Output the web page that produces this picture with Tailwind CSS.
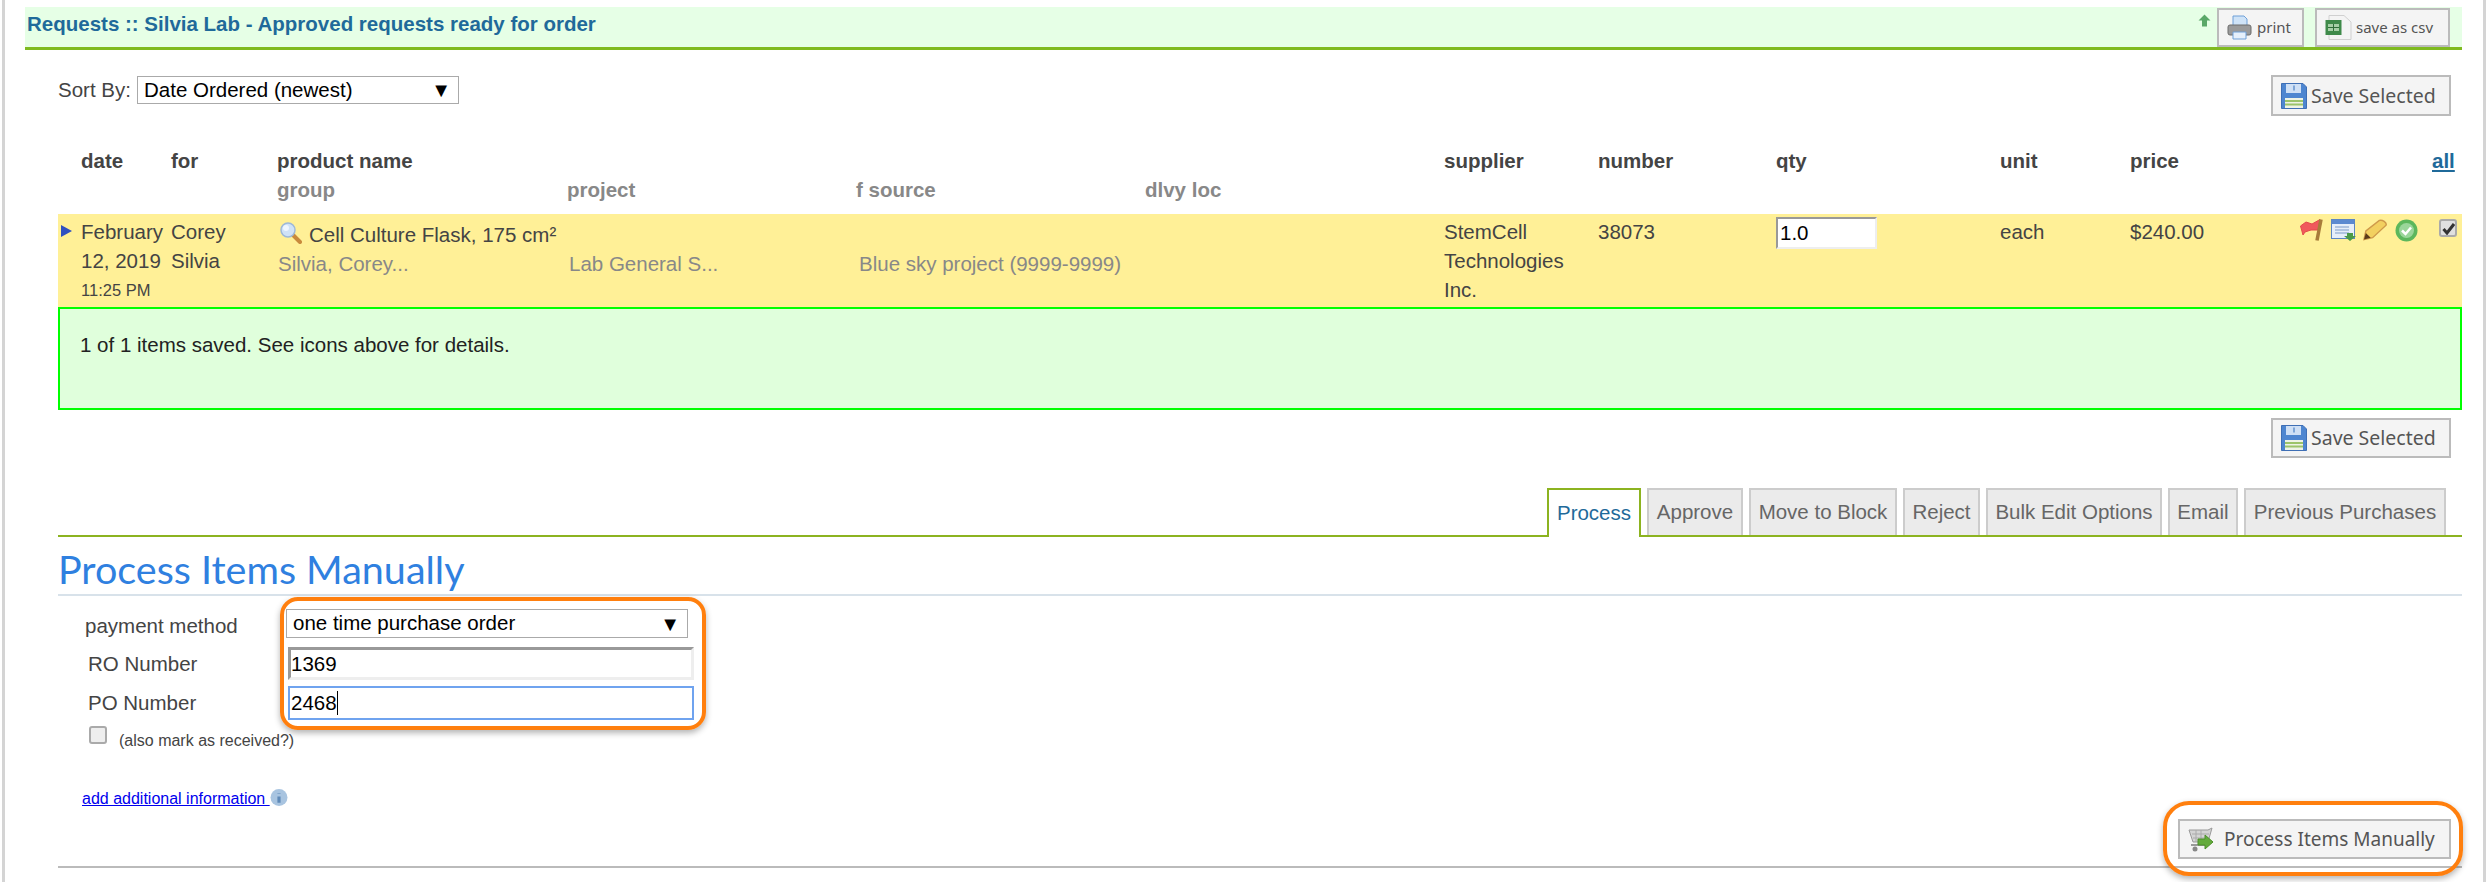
<!DOCTYPE html>
<html lang="en">
<head>
<meta charset="UTF-8">
<title>Requests - Approved requests ready for order</title>
<script src="https://cdn.jsdelivr.net/npm/@tailwindcss/browser@4"></script>
</head>
<body class="bg-white font-['Liberation_Sans',sans-serif] text-[20.5px] text-[#444]">
<div class="relative h-[882px] w-[2489px] overflow-hidden">
  <!-- page frame -->
  <div class="ml-[2px] h-[882px] w-[2484px] border-x-[3px] border-[#d4d4d4] pl-[20px] pt-[7px]">
    <!-- title bar -->
    <div class="flex h-[43px] w-[2437px] items-start border-b-[3px] border-[#7fba1f] bg-[#e6ffe6] pl-[2px]">
      <h1 class="pt-[6px] text-[20.5px] leading-[22px] font-bold text-[#1f6a9a]">Requests :: Silvia Lab - Approved requests ready for order</h1>
      <div class="ml-auto flex items-start pr-[12px]">
        <svg class="mt-[7px] mr-[6px] h-[13px] w-[13px]" viewBox="0 0 13 13"><path d="M6.500 0.500 L12.500 6.500 H9 V12.500 H4 V6.500 H0.500 Z" fill="#5aa868"/></svg>
        <button class="mt-[1px] flex h-[39px] w-[87px] items-center border-2 border-[#bbb] bg-[#f4f4f4] pl-[8px] font-['Noto_Sans',sans-serif] text-[15px] text-[#555]">
          <svg class="mr-[5px] h-[25px] w-[25px]" viewBox="0 0 25 25"><path d="M6 1 H17 L20 4 V11 H6 Z" fill="#cfe3f7" stroke="#6fa0d8"/><rect x="1" y="10" width="23" height="10" rx="2" fill="#9a9a9a" stroke="#6c6c6c"/><path d="M6 17 H19 V24 H6 Z" fill="#e6f0fb" stroke="#6fa0d8"/></svg>print
        </button>
        <button class="mt-[1px] ml-[11px] flex h-[39px] w-[135px] items-center border-2 border-[#bbb] bg-[#f4f4f4] pl-[8px] font-['Noto_Sans',sans-serif] text-[15px] text-[#555]">
          <svg class="mr-[4px] h-[25px] w-[27px]" viewBox="0 0 27 25"><path d="M4 0.500 H19 L26 7 V24.500 H4 Z" fill="#f4f4f4" stroke="#d0d0d0"/><rect x="0.500" y="5" width="16" height="15" fill="#3f8a4a"/><path d="M3 9 H14 V16 H3 Z" fill="#a6cfa6"/><path d="M8.500 9 V16 M3 12.500 H14" stroke="#2f6d39"/></svg>save as csv
        </button>
      </div>
    </div>

    <!-- sort + save -->
    <div class="flex w-[2426px] items-start pl-[33px]">
      <div class="flex items-center pt-[26px]">
        <label class="w-[79px] leading-[28px]">Sort By:</label>
        <div class="flex h-[28px] w-[322px] items-center justify-between border border-[#aaa] pr-[7px] pl-[6px] text-black"><span>Date Ordered (newest)</span><span class="text-[20px] leading-[20px]">▼</span></div>
      </div>
      <button class="mt-[25px] ml-auto flex h-[41px] w-[180px] items-center border-2 border-[#bbb] bg-[#f4f4f4] pl-[8px] font-['Noto_Sans',sans-serif] text-[19.500px] text-[#555]">
        <svg class="mr-[4px] h-[26px] w-[26px]" viewBox="0 0 26 26"><path d="M0.500 0.500 H22 L25.500 4 V25.500 H0.500 Z" fill="#4e86d0" stroke="#3f6fb5"/><rect x="5" y="1" width="15" height="9" fill="#cfe0f5"/><rect x="12" y="2.500" width="2" height="5" fill="#7ea6d8"/><rect x="4" y="15" width="18" height="10" fill="#eef3e6"/><path d="M4 18 H22 M4 21.500 H22" stroke="#9cc46a" stroke-width="2"/></svg>Save Selected
      </button>
    </div>

    <!-- table -->
    <div class="mt-[31px] ml-[33px] w-[2404px]">
      <div class="grid h-[67px] grid-cols-[23px_90px_106px_1167px_154px_178px_224px_130px_1fr_30px] leading-[27px] font-bold">
        <div></div>
        <div>date</div>
        <div>for</div>
        <div>
          <div>product name</div>
          <div class="grid grid-cols-[290px_289px_289px_1fr] leading-[31px] text-[#888]">
            <div>group</div><div>project</div><div>f source</div><div>dlvy loc</div>
          </div>
        </div>
        <div>supplier</div>
        <div>number</div>
        <div>qty</div>
        <div>unit</div>
        <div>price</div>
        <a class="text-[#1f6a9a] underline">all</a>
      </div>
      <div class="grid h-[93px] grid-cols-[23px_90px_106px_1167px_154px_178px_224px_130px_158px_1fr] bg-[#fff097] pt-[3px] leading-[29px]">
        <div class="pt-[8px] pl-[2px]"><svg class="h-[12px] w-[12px]" viewBox="0 0 12 12"><path d="M1 0 L12 6 L1 12 Z" fill="#2f50c0"/></svg></div>
        <div>February 12, 2019<div class="text-[16.500px] leading-[31px]">11:25 PM</div></div>
        <div class="pr-[10px]">Corey Silvia</div>
        <div>
          <div class="flex items-center">
            <svg class="mr-[7px] ml-[3px] h-[22px] w-[22px]" viewBox="0 0 22 22"><path d="M13 13 L20 20" stroke="#c98a3c" stroke-width="4" stroke-linecap="round"/><circle cx="8" cy="8" r="7" fill="#cfe2f7" stroke="#9db8d8" stroke-width="1.500"/><circle cx="6" cy="6" r="3" fill="#eef6ff"/></svg>
            <span class="pt-[3px]">Cell Culture Flask, 175 cm²</span>
          </div>
          <div class="grid grid-cols-[291px_290px_1fr] pl-[1px] text-[#888]">
            <div>Silvia, Corey...</div><div>Lab General S...</div><div>Blue sky project (9999-9999)</div>
          </div>
        </div>
        <div class="pr-[20px]">StemCell Technologies Inc.</div>
        <div>38073</div>
        <div><input class="h-[32px] w-[101px] border-2 border-t-[#999] border-r-[#eee] border-b-[#eee] border-l-[#999] bg-white pl-[2px] text-black" value="1.0"></div>
        <div>each</div>
        <div>$240.00</div>
        <div class="flex items-start pt-[2px] pl-[12px]">
          <svg class="h-[22px] w-[23px] shrink-0" viewBox="0 0 23 22"><path d="M0.500 7 L6 3 L12 5 L20 0.500 L18 11 L11 11 L5 13 L3 16 Z" fill="#f0595c" stroke="#e34b4b"/><path d="M21 0.500 L17 21.500" stroke="#a87c3a" stroke-width="3.500"/></svg>
          <svg class="ml-[8px] h-[22px] w-[26px] shrink-0" viewBox="0 0 26 22"><rect x="0.500" y="0.500" width="23" height="19" fill="#e6eef9" stroke="#5c86c4"/><rect x="1" y="1" width="22" height="4" fill="#5c8ad0"/><path d="M4 8 H18 M4 11 H18 M4 14 H18" stroke="#7c9bc8"/><path d="M16 14 H22 V17 H25 L19 22 L13 17 H16 Z" fill="#4a9a48"/></svg>
          <svg class="ml-[6px] h-[22px] w-[25px] shrink-0" viewBox="0 0 26 22"><path d="M1 21 L3 12 L17 1 C20 0 25 3 24 6 L10 19 Z" fill="#f2d060" stroke="#cf9a4a" stroke-width="1.500"/><path d="M1 21 L3 14 L8 19 Z" fill="#5a3a1a"/></svg>
          <svg class="ml-[7px] h-[23px] w-[23px] shrink-0" viewBox="0 0 23 23"><circle cx="11.500" cy="11.500" r="11" fill="#5cb75c"/><circle cx="11.500" cy="11.500" r="7.500" fill="#9ad69a"/><path d="M7 11.500 L10.500 15 L16 8.500" stroke="#fff" stroke-width="2.500" fill="none"/></svg>
          <div class="ml-[21px] flex h-[18px] w-[18px] shrink-0 items-center justify-center rounded-[3px] border-2 border-[#aaa] bg-[#e0e0e0]"><svg class="h-[13px] w-[13px]" viewBox="0 0 13 13"><path d="M1.500 7 L5 11 L12 2" stroke="#333" stroke-width="3" fill="none"/></svg></div>
        </div>
      </div>
      <div class="h-[103px] border-2 border-[#0f0] bg-[#e0ffdc] pt-[24px] pl-[20px] leading-[24px] text-[#222]">1 of 1 items saved. See icons above for details.</div>
      <div class="flex justify-end pt-[8px] pr-[11px]">
        <button class="flex h-[40px] w-[180px] items-center border-2 border-[#bbb] bg-[#f4f4f4] pl-[8px] font-['Noto_Sans',sans-serif] text-[19.500px] text-[#555]">
          <svg class="mr-[4px] h-[26px] w-[26px]" viewBox="0 0 26 26"><path d="M0.500 0.500 H22 L25.500 4 V25.500 H0.500 Z" fill="#4e86d0" stroke="#3f6fb5"/><rect x="5" y="1" width="15" height="9" fill="#cfe0f5"/><rect x="12" y="2.500" width="2" height="5" fill="#7ea6d8"/><rect x="4" y="15" width="18" height="10" fill="#eef3e6"/><path d="M4 18 H22 M4 21.500 H22" stroke="#9cc46a" stroke-width="2"/></svg>Save Selected
        </button>
      </div>

      <!-- tabs -->
      <div class="mt-[30px] flex h-[49px] items-end justify-end gap-[6px] border-b-2 border-[#8cb320] pr-[16px] text-[#666]">
        <div class="-mb-[2px] flex h-[49px] w-[94px] items-center justify-center border-2 border-b-0 border-[#8cb320] bg-white text-[#1f6a9a]">Process</div>
        <div class="flex h-[47px] w-[96px] items-center justify-center border-2 border-b-0 border-[#ccc] bg-[#ebebeb]">Approve</div>
        <div class="flex h-[47px] w-[148px] items-center justify-center border-2 border-b-0 border-[#ccc] bg-[#ebebeb]">Move to Block</div>
        <div class="flex h-[47px] w-[77px] items-center justify-center border-2 border-b-0 border-[#ccc] bg-[#ebebeb]">Reject</div>
        <div class="flex h-[47px] w-[176px] items-center justify-center border-2 border-b-0 border-[#ccc] bg-[#ebebeb]">Bulk Edit Options</div>
        <div class="flex h-[47px] w-[70px] items-center justify-center border-2 border-b-0 border-[#ccc] bg-[#ebebeb]">Email</div>
        <div class="flex h-[47px] w-[202px] items-center justify-center border-2 border-b-0 border-[#ccc] bg-[#ebebeb]">Previous Purchases</div>
      </div>

      <!-- process form -->
      <h2 class="h-[59px] border-b-2 border-[#d8e2ea] pt-[11px] font-['Lato',sans-serif] text-[39.500px] leading-[42px] text-[#2f80e0]">Process Items Manually</h2>
      <div class="pt-[13px]">
        <div class="flex h-[38px] items-start">
          <label class="w-[228px] pt-[5px] pl-[27px] leading-[24px]">payment method</label>
          <div class="flex h-[29px] w-[402px] items-center justify-between border border-[#aaa] pr-[7px] pl-[6px] text-black"><span>one time purchase order</span><span class="text-[20px] leading-[20px]">▼</span></div>
        </div>
        <div class="flex h-[39px] items-start">
          <label class="w-[230px] pt-[5px] pl-[30px] leading-[24px]">RO Number</label>
          <input class="h-[33px] w-[406px] border-[3px] border-t-[#999] border-r-[#eee] border-b-[#eee] border-l-[#999] text-black" value="1369">
        </div>
        <div class="flex h-[39px] items-start">
          <label class="w-[230px] pt-[5px] pl-[30px] leading-[24px]">PO Number</label>
          <div class="flex h-[34px] w-[406px] items-center border-2 border-[#6fa3ef] pl-[1px] text-black">2468<span class="h-[24px] w-[1px] bg-black"></span></div>
        </div>
        <div class="flex items-start pl-[31px]">
          <div class="mt-[1px] h-[18px] w-[18px] rounded-[3px] border-2 border-[#aaa] bg-[#eee]"></div>
          <span class="pt-[4px] pl-[12px] text-[16px] leading-[24px]">(also mark as received?)</span>
        </div>
        <div class="flex items-start pt-[36px] pl-[24px]">
          <a class="text-[16px] leading-[20px] text-[#0000ee] underline">add additional information&nbsp;</a>
          <svg class="h-[18px] w-[18px]" viewBox="0 0 17 17"><circle cx="8.500" cy="8" r="8" fill="#a8c4e0"/><path d="M8.500 4 V4.500 M8.500 7 V13" stroke="#5f8ab8" stroke-width="3"/></svg>
        </div>
      </div>
      <div class="flex justify-end pt-[10px] pr-[11px]">
        <button class="flex h-[40px] w-[273px] items-center border-2 border-[#bbb] bg-[#f4f4f4] pl-[8px] font-['Noto_Sans',sans-serif] text-[19px] text-[#555]">
          <svg class="mr-[11px] h-[25px] w-[25px]" viewBox="0 0 25 25"><path d="M1 3 H20 L24 1 L20 15 H5 Z" fill="#d4d4d4" stroke="#999"/><path d="M4 7 H21 M5 11 H20 M8 3 V15 M13 3 V15" stroke="#aaa"/><path d="M3 18 H19" stroke="#999" stroke-width="2"/><circle cx="7" cy="22" r="2.500" fill="#888"/><path d="M10 12 H17 V8 L25 15 L17 22 V18 H10 Z" fill="#63ab3c" stroke="#4c8f2a"/></svg>Process Items Manually
        </button>
      </div>
      <div class="mt-[7px] h-[2px] bg-[#bbb]"></div>
    </div>
  </div>

  <!-- orange callouts -->
  <div class="absolute top-[597px] left-[280px] h-[133px] w-[426px] rounded-[18px] border-[4px] border-[#ff7f0e] shadow-[0_3px_6px_rgba(0,0,0,0.3)]"></div>
  <div class="absolute top-[801px] left-[2163px] h-[75px] w-[300px] rounded-[26px] border-[4px] border-[#ff7f0e] shadow-[0_3px_6px_rgba(0,0,0,0.3)]"></div>
</div>
</body>
</html>
